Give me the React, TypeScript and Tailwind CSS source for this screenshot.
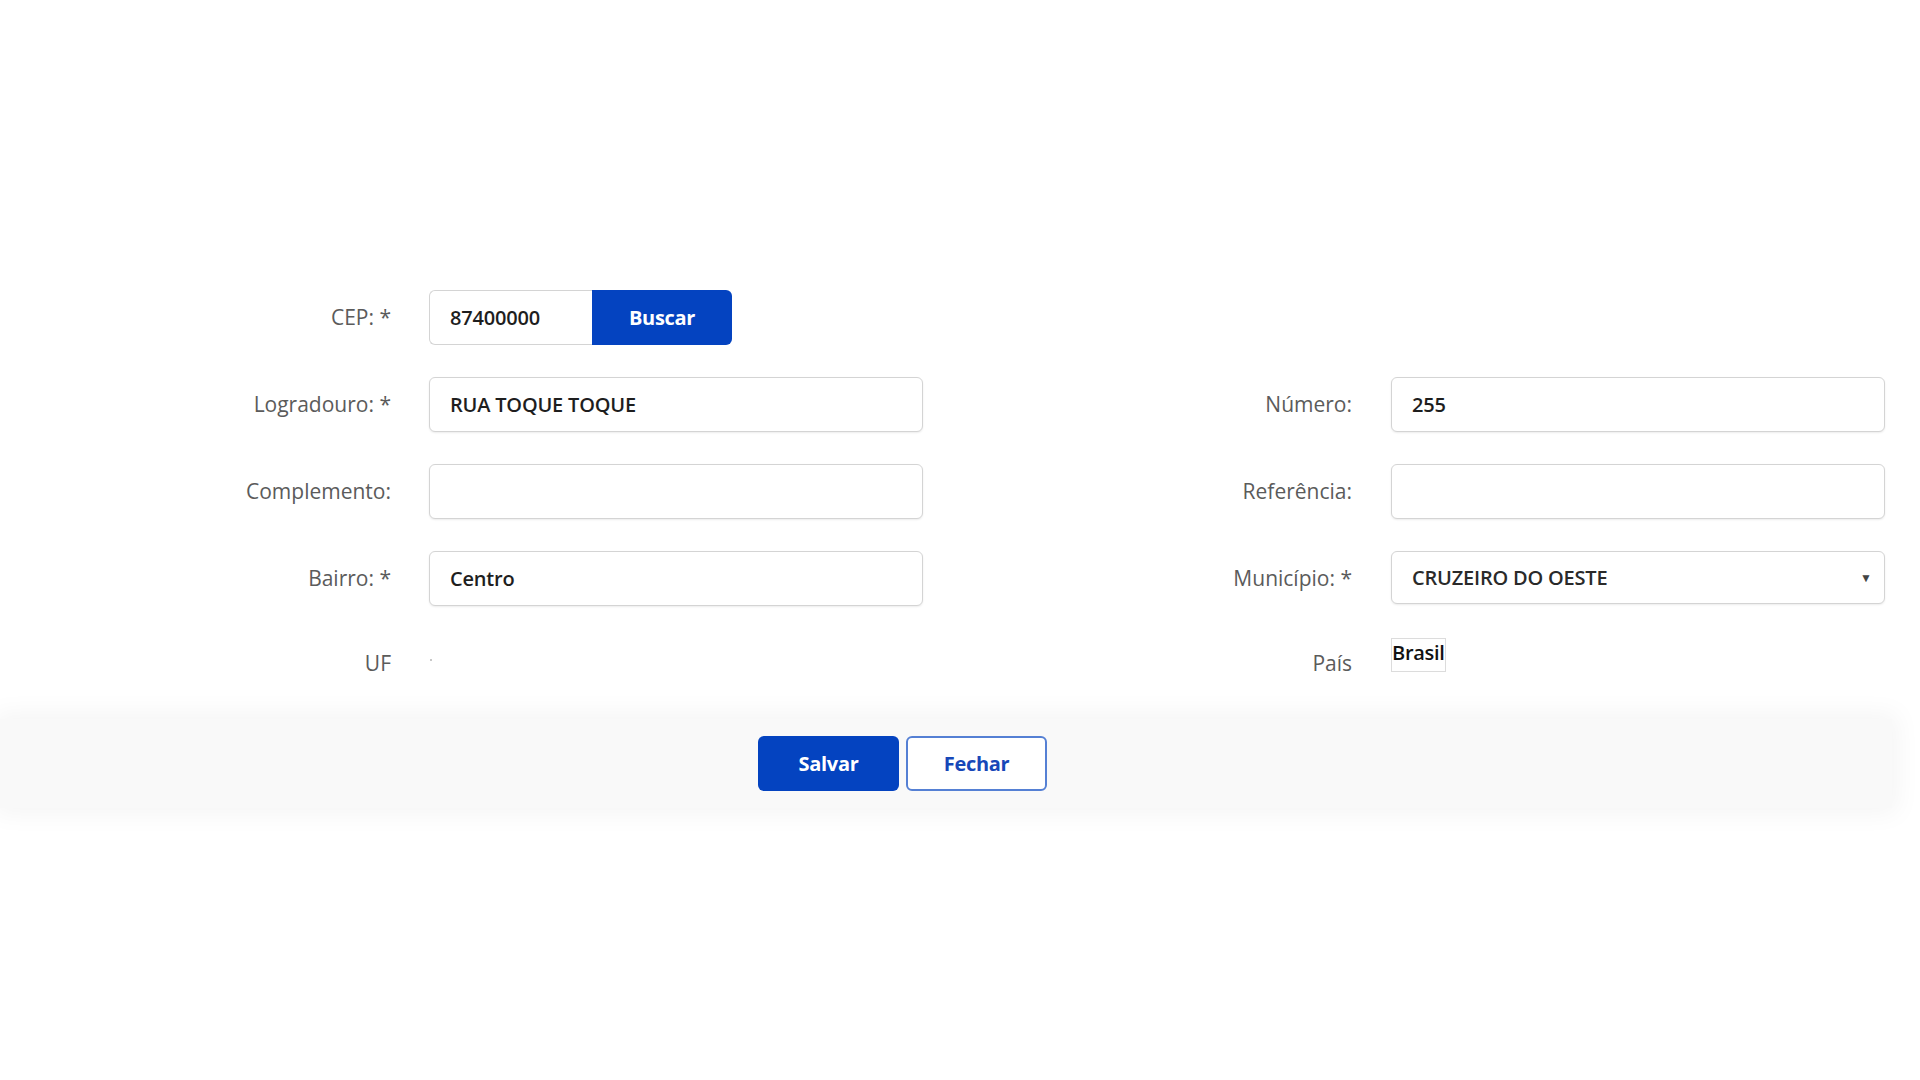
import React from 'react';

const labelCls = "text-right text-[21px] text-[#5b5b5b] leading-none";
const inputCls =
  "h-[55px] w-[494px] rounded-[6px] border border-[#d4d4d4] bg-white px-[20px] text-[20px] font-semibold tracking-[-0.2px] text-[#1e1e1e] shadow-[0_1px_2px_rgba(0,0,0,0.08)] outline-none";

function Field({ value }: { value?: string }) {
  return <input className={inputCls} defaultValue={value} readOnly />;
}

export default function App() {
  return (
    <div className="min-h-[1080px] bg-white pt-[290px]" style={{ fontFamily: '"Open Sans", "Noto Sans", sans-serif' }}>
      <div className="flex flex-col gap-[32px]">
        {/* CEP */}
        <div className="flex h-[55px] items-center">
          <label className={`w-[391px] ${labelCls}`}>CEP: *</label>
          <div className="ml-[38px] flex">
            <input
              className="h-[55px] w-[163px] rounded-l-[6px] border border-r-0 border-[#d4d4d4] bg-white px-[20px] text-[20px] font-semibold tracking-[-0.2px] text-[#1e1e1e] outline-none"
              defaultValue="87400000"
              readOnly
            />
            <button className="h-[55px] w-[140px] rounded-r-[6px] bg-[#0443c0] text-[20px] font-bold tracking-[-0.3px] text-white">
              Buscar
            </button>
          </div>
        </div>

        {/* Logradouro / Número */}
        <div className="flex h-[55px] items-center">
          <label className={`w-[391px] ${labelCls}`}>Logradouro: *</label>
          <div className="ml-[38px]"><Field value="RUA TOQUE TOQUE" /></div>
          <label className={`w-[429px] ${labelCls}`}>Número:</label>
          <div className="ml-[39px]"><Field value="255" /></div>
        </div>

        {/* Complemento / Referência */}
        <div className="flex h-[55px] items-center">
          <label className={`w-[391px] ${labelCls}`}>Complemento:</label>
          <div className="ml-[38px]"><Field /></div>
          <label className={`w-[429px] ${labelCls}`}>Referência:</label>
          <div className="ml-[39px]"><Field /></div>
        </div>

        {/* Bairro / Município */}
        <div className="flex h-[55px] items-center">
          <label className={`w-[391px] ${labelCls}`}>Bairro: *</label>
          <div className="ml-[38px]"><Field value="Centro" /></div>
          <label className={`w-[429px] ${labelCls}`}>Município: *</label>
          <div className="ml-[39px] self-start">
            <div className="flex h-[53px] w-[494px] items-center justify-between rounded-[6px] border border-[#d4d4d4] bg-white pl-[20px] pr-[12px] shadow-[0_1px_2px_rgba(0,0,0,0.08)]">
              <span className="text-[20px] font-semibold tracking-[-0.2px] text-[#2a2a2a]">CRUZEIRO DO OESTE</span>
              <span className="text-[12px] text-[#444]">▼</span>
            </div>
          </div>
        </div>

        {/* UF / País */}
        <div className="flex h-[50px] items-start">
          <label className={`w-[391px] pt-[15px] ${labelCls}`}>UF</label>
          <div className="ml-[39px] w-[493px] pt-[21px]">
            <span className="block h-[2px] w-[2px] bg-[#c8c8c8]"></span>
          </div>
          <label className={`w-[429px] pt-[15px] ${labelCls}`}>País</label>
          <div className="ml-[39px] border border-[#dcdcdc] pb-[4px] text-[20px] font-semibold leading-[28px] tracking-[-0.3px] text-[#111]">
            Brasil
          </div>
        </div>
      </div>

      {/* footer */}
      <div className="mt-[31px] flex h-[89px] w-[1892px] items-center gap-[7px] bg-[#f9f9f9] pl-[758px] shadow-[0_0_24px_6px_rgba(0,0,0,0.045)]">
        <button className="h-[55px] w-[141px] rounded-[6px] bg-[#0443c0] text-[20px] font-bold tracking-[-0.3px] text-white">
          Salvar
        </button>
        <button className="h-[55px] w-[141px] rounded-[6px] border-2 border-[#5580d4] bg-white text-[20px] font-bold tracking-[-0.3px] text-[#1747b8]">
          Fechar
        </button>
      </div>
    </div>
  );
}
